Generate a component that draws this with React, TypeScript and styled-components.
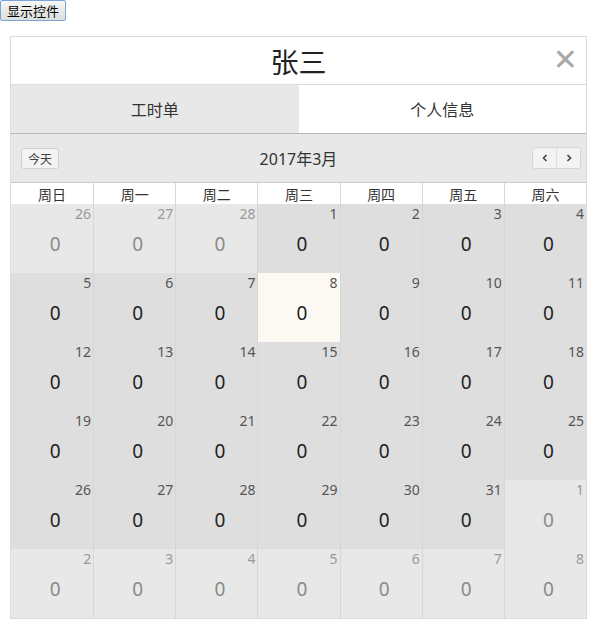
import React from "react";
import styled, { createGlobalStyle } from "styled-components";

const Global = createGlobalStyle`
  html, body { margin: 0; padding: 0; background: #fff; }
  body { font-family: "Noto Sans", "Noto Sans CJK SC", sans-serif; color: #333; }
`;

const ShowButton = styled.button`
  display: block;
  height: 21px;
  padding: 0 6px;
  margin: 0;
  font-family: "Noto Sans CJK SC", sans-serif;
  font-size: 13px;
  line-height: 19px;
  color: #000;
  background: linear-gradient(#f6f6f6, #dedede);
  border: 1px solid #7aa3d8;
  border-radius: 2px;
`;

const Panel = styled.div`
  margin: 15px 0 0 10px;
  width: 577px;
  box-sizing: border-box;
  border: 1px solid #dcdcdc;
  background: #fff;
`;

const TitleBar = styled.div`
  position: relative;
  height: 47px;
  display: flex;
  align-items: center;
  justify-content: center;
  border-bottom: 1px solid #dcdcdc;
  font-family: "Noto Sans CJK SC", sans-serif;
  font-size: 28px;
  color: #222;
`;

const Close = styled.span`
  position: absolute;
  right: 8px;
  top: 6px;
  font-family: "DejaVu Sans", sans-serif;
  font-size: 30px;
  line-height: 34px;
  color: #a8a8a8;
`;

const Tabs = styled.div`
  display: flex;
  height: 48px;
  border-bottom: 1px solid #b5b5b5;
`;

const Tab = styled.div<{ $active?: boolean }>`
  flex: 1;
  display: flex;
  align-items: center;
  justify-content: center;
  background: ${(p) => (p.$active ? "#e8e8e8" : "#fff")};
  font-family: "Noto Sans CJK SC", sans-serif;
  font-size: 16px;
  color: #333;
`;

const Toolbar = styled.div`
  position: relative;
  height: 48px;
  display: flex;
  align-items: center;
  justify-content: space-between;
  padding: 0 5px 0 10px;
  background: #e8e8e8;
  border-bottom: 1px solid #c9c9c9;
`;

const SmallButton = styled.div`
  height: 21px;
  box-sizing: border-box;
  padding: 0 6px;
  display: flex;
  align-items: center;
  border: 1px solid #d0d0d0;
  border-radius: 3px;
  background: #f3f3f3;
  font-family: "Noto Sans CJK SC", sans-serif;
  font-size: 12px;
  color: #444;
`;

const MonthTitle = styled.div`
  position: absolute;
  left: 0;
  right: 0;
  text-align: center;
  font-family: "Noto Sans", "Noto Sans CJK SC", sans-serif;
  font-size: 16px;
  color: #333;
  pointer-events: none;
`;

const NavGroup = styled.div`
  display: flex;
  height: 20px;
  border: 1px solid #d6d6d6;
  border-radius: 3px;
  background: #f3f3f3;
  overflow: hidden;
`;

const NavBtn = styled.div<{ $first?: boolean }>`
  width: 23px;
  display: flex;
  align-items: center;
  justify-content: center;
  border-left: ${(p) => (p.$first ? "none" : "1px solid #dedede")};
  color: #444;
`;

const Grid = styled.div`
  display: grid;
  grid-template-columns: repeat(7, 1fr);
`;

const HeadCell = styled.div<{ $first?: boolean }>`
  height: 21px;
  display: flex;
  align-items: center;
  justify-content: center;
  background: #fff;
  border-left: ${(p) => (p.$first ? "none" : "1px solid #d8d8d8")};
  font-family: "Noto Sans CJK SC", sans-serif;
  font-size: 14px;
  color: #333;
`;

const DayCell = styled.div<{ $first?: boolean; $other?: boolean; $today?: boolean }>`
  height: 69px;
  box-sizing: border-box;
  display: flex;
  flex-direction: column;
  border-left: ${(p) => (p.$first ? "none" : "1px solid #d6d6d6")};
  background: ${(p) => (p.$today ? "#fcf9f2" : p.$other ? "#e8e8e8" : "#dedede")};
`;

const DayNum = styled.div<{ $other?: boolean }>`
  text-align: right;
  padding: 1px 2px 0 0;
  font-size: 14px;
  line-height: 18px;
  color: ${(p) => (p.$other ? "#999" : "#555")};
`;

const Hours = styled.div<{ $other?: boolean }>`
  text-align: center;
  margin-top: 10px;
  padding-left: 6px;
  font-size: 19px;
  line-height: 22px;
  color: ${(p) => (p.$other ? "#8a8a8a" : "#222")};
`;

const weekdays = ["周日", "周一", "周二", "周三", "周四", "周五", "周六"];

const days: { n: number; other: boolean }[] = [];
[26, 27, 28].forEach((n) => days.push({ n, other: true }));
for (let i = 1; i <= 31; i++) days.push({ n: i, other: false });
for (let i = 1; i <= 8; i++) days.push({ n: i, other: true });

export default function App() {
  return (
    <>
      <Global />
      <ShowButton>显示控件</ShowButton>
      <Panel>
        <TitleBar>
          张三
          <Close>✕</Close>
        </TitleBar>
        <Tabs>
          <Tab $active>工时单</Tab>
          <Tab>个人信息</Tab>
        </Tabs>
        <Toolbar>
          <SmallButton>今天</SmallButton>
          <MonthTitle>2017年3月</MonthTitle>
          <NavGroup>
            <NavBtn $first>
              <svg width="8" height="8" viewBox="0 0 8 8">
                <path d="M5.5 1 L2.5 4 L5.5 7" fill="none" stroke="#444" strokeWidth="1.6" />
              </svg>
            </NavBtn>
            <NavBtn>
              <svg width="8" height="8" viewBox="0 0 8 8">
                <path d="M2.5 1 L5.5 4 L2.5 7" fill="none" stroke="#444" strokeWidth="1.6" />
              </svg>
            </NavBtn>
          </NavGroup>
        </Toolbar>
        <Grid>
          {weekdays.map((w, i) => (
            <HeadCell key={w} $first={i === 0}>
              {w}
            </HeadCell>
          ))}
          {days.map((d, i) => (
            <DayCell
              key={i}
              $first={i % 7 === 0}
              $other={d.other}
              $today={!d.other && d.n === 8}
            >
              <DayNum $other={d.other}>{d.n}</DayNum>
              <Hours $other={d.other}>0</Hours>
            </DayCell>
          ))}
        </Grid>
      </Panel>
    </>
  );
}
